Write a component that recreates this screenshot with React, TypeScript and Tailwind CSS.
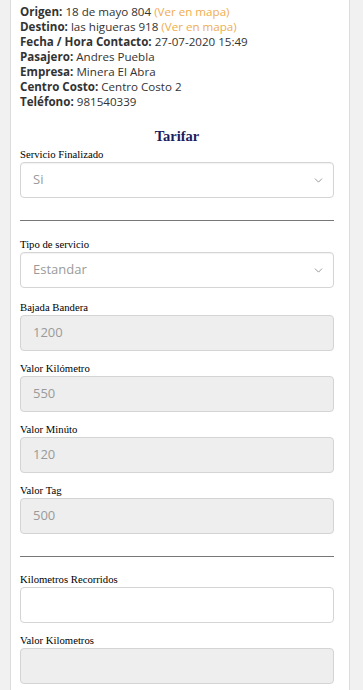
import { ChevronDown } from 'lucide-react';

const info = [
  { label: 'Origen:', value: '18 de mayo 804', map: true },
  { label: 'Destino:', value: 'las higueras 918', map: true },
  { label: 'Fecha / Hora Contacto:', value: '27-07-2020 15:49' },
  { label: 'Pasajero:', value: 'Andres Puebla' },
  { label: 'Empresa:', value: 'Minera El Abra' },
  { label: 'Centro Costo:', value: 'Centro Costo 2' },
  { label: 'Teléfono:', value: '981540339' },
];

const serif = "font-['Liberation_Serif',serif]";
const sans = "font-['Open_Sans',sans-serif]";

function Label({ children }: { children: React.ReactNode }) {
  return <div className={`${serif} h-4 text-[10.7px] leading-4 text-black`}>{children}</div>;
}

function Select({ value }: { value: string }) {
  return (
    <div className="mb-[11px] flex h-9 items-center justify-between rounded border border-[#d4d4d4] bg-white pl-3 pr-2 shadow-[inset_0_1px_1px_rgba(0,0,0,0.05)]">
      <span className={`${sans} text-[13px] text-[#9a9a9a]`}>{value}</span>
      <ChevronDown size={13} strokeWidth={1.6} className="text-[#8a8a8a]" />
    </div>
  );
}

function Field({ value, disabled = true }: { value?: string; disabled?: boolean }) {
  return (
    <div
      className={`mb-[9px] flex h-9 items-center rounded border border-[#d4d4d4] pl-3 ${
        disabled ? 'bg-[#eeeeee]' : 'bg-white'
      }`}
    >
      <span className={`${sans} text-[13px] text-[#9a9a9a]`}>{value}</span>
    </div>
  );
}

export default function App() {
  return (
    <div className="min-h-[690px] bg-[#f1f1f1] pl-[10px] pr-[13px]">
      <div className="flex min-h-[690px] flex-col border-x border-[#dcdcdc] bg-white pl-[9px] pr-[15px] pt-[4px]">
        {/* Datos del servicio */}
        <div className={`${sans} text-[11.6px] leading-[15px] text-[#333]`}>
          {info.map((row) => (
            <div key={row.label}>
              <span className="font-bold">{row.label}</span> {row.value}
              {row.map && <span className="text-[#f0ad4e]"> (Ver en mapa)</span>}
            </div>
          ))}
        </div>

        <h3 className={`${serif} mb-[3px] mt-[20px] text-center text-[14.5px] font-bold leading-[14px] text-[#1c1c5c]`}>
          Tarifar
        </h3>

        <Label>Servicio Finalizado</Label>
        <Select value="Si" />

        <hr className="mb-[15px] mt-[11px] border-t border-[#777]" />

        <Label>Tipo de servicio</Label>
        <Select value="Estandar" />

        <Label>Bajada Bandera</Label>
        <Field value="1200" />
        <Label>Valor Kilómetro</Label>
        <Field value="550" />
        <Label>Valor Minúto</Label>
        <Field value="120" />
        <Label>Valor Tag</Label>
        <Field value="500" />

        <hr className="mb-[14px] mt-[13px] border-t border-[#777]" />

        <Label>Kilometros Recorridos</Label>
        <Field disabled={false} />
        <Label>Valor Kilometros</Label>
        <Field />
      </div>
    </div>
  );
}
